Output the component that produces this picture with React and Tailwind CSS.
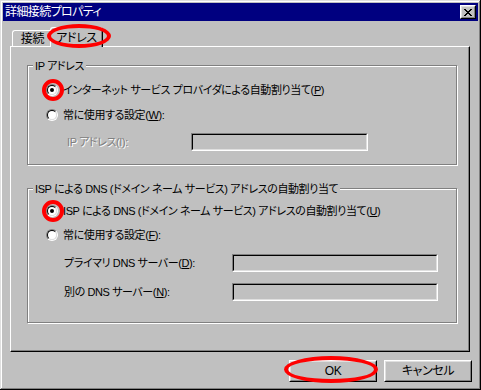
import React from 'react';

const Radio = ({ checked }) => (
  <div className="w-[12px] h-[12px] shrink-0 rounded-full border border-t-[#808080] border-l-[#808080] border-b-white border-r-white">
    <div className="w-full h-full rounded-full border border-t-black border-l-black border-b-[#dfdfdf] border-r-[#dfdfdf] bg-white flex items-center justify-center">
      {checked && <div className="w-[4px] h-[4px] rounded-full bg-black" />}
    </div>
  </div>
);

const Field = ({ w }) => (
  <div className={`${w} h-[18px] border border-t-[#808080] border-l-[#808080] border-b-white border-r-white`}>
    <div className="w-full h-full border border-t-black border-l-black border-b-[#dfdfdf] border-r-[#dfdfdf] bg-[#c0c0c0]" />
  </div>
);

const Disabled = ({ children }) => (
  <span className="text-[#808080] [text-shadow:1px_1px_0_#fff]">{children}</span>
);

const Group = ({ label, className, children }) => (
  <div className={`flex flex-col border border-[#808080] shadow-[inset_1px_1px_#fff,1px_1px_#fff] ${className}`}>
    <div className="-mt-[8px] ml-[5px] w-fit px-[2px] h-[16px] leading-[16px] bg-[#c0c0c0]">{label}</div>
    {children}
  </div>
);

const Button = ({ children }) => (
  <button className="w-[88px] h-[22px] bg-[#c0c0c0] border border-t-white border-l-white border-b-black border-r-black">
    <div className="w-full h-full flex items-center justify-center border border-t-[#dfdfdf] border-l-[#dfdfdf] border-b-[#808080] border-r-[#808080]">
      {children}
    </div>
  </button>
);

export default function App() {
  return (
    <div className="relative w-[481px] h-[390px] bg-[#c0c0c0] p-[3px] flex flex-col text-[11px] leading-[14px] tracking-[-0.4px] text-black [font-family:'Liberation_Sans','Noto_Sans_CJK_JP',sans-serif] [font-feature-settings:'palt'] shadow-[inset_-1px_-1px_#000,inset_1px_1px_#dfdfdf,inset_-2px_-2px_#808080,inset_2px_2px_#fff]">
      {/* title bar */}
      <div className="h-[18px] bg-[#000080] flex items-center justify-between pl-[2px] pr-[2px]">
        <span className="text-white text-[12px] tracking-[-0.6px]">詳細接続プロパティ</span>
        <div className="w-[16px] h-[14px] bg-[#c0c0c0] border border-t-white border-l-white border-b-black border-r-black">
          <div className="w-full h-full border border-t-[#dfdfdf] border-l-[#dfdfdf] border-b-[#808080] border-r-[#808080] flex items-center justify-center">
            <svg width="8" height="7" viewBox="0 0 8 7" shapeRendering="crispEdges">
              <path d="M0 0h2v1h-2zM6 0h2v1h-2zM1 1h2v1h-2zM5 1h2v1h-2zM2 2h4v1h-4zM3 3h2v1h-2zM2 4h4v1h-4zM1 5h2v1h-2zM5 5h2v1h-2zM0 6h2v1h-2zM6 6h2v1h-2z" fill="#000" />
            </svg>
          </div>
        </div>
      </div>

      {/* tabs */}
      <div className="mt-[6px] ml-[7px] h-[19px] flex items-end text-[12px] tracking-[-0.3px]">
        <div className="ml-[2px] w-[40px] h-[16px] flex items-center justify-center border-l border-t border-white rounded-tl-[3px]">
          接続
        </div>
        <div className="relative z-10 -ml-[2px] -mb-[1px] w-[53px] h-[20px] flex items-center justify-center bg-[#c0c0c0] border-l border-t border-r border-t-white border-l-white border-r-black rounded-t-[3px] shadow-[inset_-1px_0_#808080]">
          アドレス
        </div>
      </div>

      {/* panel */}
      <div className="ml-[7px] w-[460px] h-[306px] border border-t-white border-l-white border-r-black border-b-black shadow-[inset_-1px_-1px_#808080] px-[16px] pt-[18px]">
        <Group label="IP アドレス" className="w-[430px] h-[100px]">
          <div className="mt-[8px] ml-[18px] h-[16px] flex items-center gap-[5px]">
            <Radio checked />
            <span>インターネット サービス プロバイダによる自動割り当て(<u>P</u>)</span>
          </div>
          <div className="mt-[9px] ml-[18px] h-[16px] flex items-center gap-[5px]">
            <Radio />
            <span>常に使用する設定(<u>W</u>):</span>
          </div>
          <div className="mt-[10px] ml-[39px] flex items-center">
            <div className="w-[124px]"><Disabled>IP アドレス(I):</Disabled></div>
            <Field w="w-[177px]" />
          </div>
        </Group>

        <Group label="ISP による DNS (ドメイン ネーム サービス) アドレスの自動割り当て" className="mt-[23px] w-[430px] h-[135px]">
          <div className="mt-[6px] ml-[18px] h-[16px] flex items-center gap-[5px]">
            <Radio checked />
            <span>ISP による DNS (ドメイン ネーム サービス) アドレスの自動割り当て(<u>U</u>)</span>
          </div>
          <div className="mt-[8px] ml-[18px] h-[16px] flex items-center gap-[5px]">
            <Radio />
            <span>常に使用する設定(<u>F</u>):</span>
          </div>
          <div className="mt-[11px] ml-[36px] flex items-center">
            <div className="w-[168px]">プライマリ DNS サーバー(<u>D</u>):</div>
            <Field w="w-[206px]" />
          </div>
          <div className="mt-[11px] ml-[36px] flex items-center">
            <div className="w-[168px]">別の DNS サーバー(<u>N</u>):</div>
            <Field w="w-[206px]" />
          </div>
        </Group>
      </div>

      {/* buttons */}
      <div className="mt-[8px] mr-[6px] flex justify-end gap-[7px] text-[12px]">
        <Button>OK</Button>
        <Button>キャンセル</Button>
      </div>

      {/* red annotations */}
      <div className="absolute left-[47px] top-[24px] w-[64px] h-[24px] rounded-[50%] border-[4px] border-[#ff0000] z-20" />
      <div className="absolute left-[42px] top-[79px] w-[22px] h-[22px] rounded-full border-[4px] border-[#ff0000] z-20" />
      <div className="absolute left-[42px] top-[200px] w-[22px] h-[22px] rounded-full border-[4px] border-[#ff0000] z-20" />
      <div className="absolute left-[284px] top-[356px] w-[94px] h-[27px] rounded-[50%] border-[4px] border-[#ff0000] z-20" />
    </div>
  );
}
